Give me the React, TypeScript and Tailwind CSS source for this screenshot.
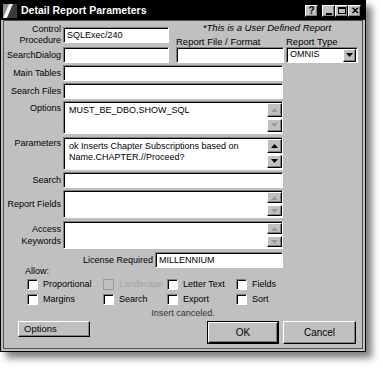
import React from 'react';

const FONT = "font-['Liberation_Sans',Arial,sans-serif]";
const SUNKEN =
  'border border-t-[#808080] border-l-[#808080] border-r-white border-b-white shadow-[inset_1px_1px_0_#000]';
const RAISED =
  'border border-t-white border-l-white border-r-black border-b-black shadow-[inset_-1px_-1px_0_#808080]';

function Input({ w = 'w-[220px]', children }: { w?: string; children?: React.ReactNode }) {
  return (
    <div className={`${w} h-[16px] bg-white ${SUNKEN} px-[3px] text-[9px] leading-[14px] text-black`}>
      {children}
    </div>
  );
}

function Arrow({ up, on }: { up?: boolean; on?: boolean }) {
  return (
    <svg width="7" height="4" viewBox="0 0 7 4">
      {up ? (
        <polygon points="3.5,0 7,4 0,4" fill={on ? '#000' : '#9a9a9a'} />
      ) : (
        <polygon points="0,0 7,0 3.5,4" fill={on ? '#000' : '#9a9a9a'} />
      )}
    </svg>
  );
}

function ScrollBtn({ up, on }: { up?: boolean; on?: boolean }) {
  return (
    <div className={`flex-1 flex items-center justify-center bg-[#c0c0c0] ${RAISED}`}>
      <Arrow up={up} on={on} />
    </div>
  );
}

function TextBox({ h, lines = [], on }: { h: string; lines?: string[]; on?: boolean }) {
  return (
    <div className={`w-[220px] ${h} bg-white ${SUNKEN} flex`}>
      <div className="flex-1 pl-[5px] pt-[3px] text-[9px] leading-[11px] text-black">
        {lines.map((l) => (
          <div key={l}>{l}</div>
        ))}
      </div>
      <div className="w-[15px] flex flex-col gap-[2px] py-[1px]">
        <ScrollBtn up on={on} />
        <ScrollBtn on={on} />
      </div>
    </div>
  );
}

function Row({
  label,
  top = 'items-center',
  labelCls = '',
  className = '',
  children,
}: {
  label: React.ReactNode;
  top?: string;
  labelCls?: string;
  className?: string;
  children: React.ReactNode;
}) {
  return (
    <div className={`flex ${top} ${className}`}>
      <div className={`w-[57px] text-right text-[9px] leading-[11px] ${labelCls}`}>{label}</div>
      <div className="ml-[2px]">{children}</div>
    </div>
  );
}

function Check({ label, off }: { label: string; off?: boolean }) {
  return (
    <div className="flex items-center h-[12px]">
      <div
        className={`w-[11px] h-[11px] ${
          off ? 'bg-[#c0c0c0] border border-[#9a9a9a]' : `bg-white ${SUNKEN}`
        }`}
      />
      <span className={`ml-[5px] text-[9px] leading-[11px] ${off ? 'text-[#a4a4a4]' : 'text-black'}`}>
        {label}
      </span>
    </div>
  );
}

function TitleBtn({ children }: { children: React.ReactNode }) {
  return (
    <div className={`w-[13px] h-[12px] bg-[#c0c0c0] ${RAISED} flex items-center justify-center text-[10px] font-bold leading-none text-black`}>
      {children}
    </div>
  );
}

export default function App() {
  return (
    <div className={`w-[383px] h-[368px] bg-white overflow-hidden ${FONT}`}>
      <div className="w-[366px] h-[352px] bg-[#c0c0c0] border border-black shadow-[6px_6px_7px_rgba(0,0,0,0.5)] flex flex-col">
        {/* title bar */}
        <div className="h-[19px] bg-black flex items-center shrink-0">
          <svg width="14" height="14" viewBox="0 0 14 14" className="ml-[2px]">
            <rect width="14" height="14" fill="#8a8a8a" />
            <polygon points="0,14 6,0 10,0 4,14" fill="#f2f2f2" />
            <polygon points="4,14 10,0 14,0 14,14" fill="#3a3a3a" />
          </svg>
          <span className="ml-[4px] text-white text-[10.5px] font-bold">Detail Report Parameters</span>
          <div className="ml-auto flex items-center mr-[4px]">
            <TitleBtn>?</TitleBtn>
            <div className="ml-[4px] flex">
              <TitleBtn>
                <div className="w-[6px] h-[2px] bg-black mt-[6px]" />
              </TitleBtn>
              <TitleBtn>
                <div className="w-[8px] h-[7px] border border-black border-t-2" />
              </TitleBtn>
              <TitleBtn>✕</TitleBtn>
            </div>
          </div>
        </div>

        {/* body */}
        <div className="flex-1 mx-[2px] mb-[2px] border border-[#505050] text-black">
          <div className="flex mt-[1px]">
            <div>
              <div className="flex mt-[2px]">
                <div className="w-[57px] text-right text-[9px] leading-[11px]">
                  Control
                  <br />
                  Procedure
                </div>
                <div className="ml-[2px] mt-[3px]">
                  <Input w="w-[106px]">SQLExec/240</Input>
                </div>
              </div>
              <Row label="SearchDialog" className="mt-[1px]">
                <Input w="w-[106px]" />
              </Row>
            </div>
            <div className="ml-[7px] w-[182px]">
              <div className="text-center text-[9.5px] italic leading-[11px] h-[11px]">
                *This is a User Defined Report
              </div>
              <div className="flex mt-[4px]">
                <div className="w-[108px]">
                  <div className="text-[9.5px] leading-[10px] h-[10px]">Report File / Format</div>
                  <Input w="w-[108px]" />
                </div>
                <div className="ml-[2px] w-[72px]">
                  <div className="text-[9.5px] leading-[10px] h-[10px]">Report Type</div>
                  <div className={`w-[72px] h-[16px] bg-white ${SUNKEN} flex items-center`}>
                    <span className="pl-[3px] text-[9px] flex-1">OMNIS</span>
                    <div className={`w-[13px] h-[13px] mr-[1px] bg-[#c0c0c0] ${RAISED} flex items-center justify-center`}>
                      <Arrow on />
                    </div>
                  </div>
                </div>
              </div>
            </div>
          </div>

          <Row label="Main Tables" className="mt-[2px]">
            <Input />
          </Row>
          <Row label="Search Files" className="mt-[2px]">
            <Input />
          </Row>
          <Row label="Options" top="items-start" labelCls="mt-[2px]" className="mt-[2px]">
            <TextBox h="h-[33px]" lines={['MUST_BE_DBO,SHOW_SQL']} />
          </Row>
          <Row label="Parameters" top="items-start" labelCls="mt-[1px]" className="mt-[3px]">
            <TextBox
              h="h-[33px]"
              on
              lines={['ok Inserts Chapter Subscriptions based on', 'Name.CHAPTER.//Proceed?']}
            />
          </Row>
          <Row label="Search" className="mt-[2px]">
            <Input />
          </Row>
          <Row label="Report Fields" className="mt-[2px]">
            <TextBox h="h-[28px]" />
          </Row>
          <Row
            label={
              <>
                Access
                <br />
                Keywords
              </>
            }
            labelCls="leading-[12px]"
            className="mt-[3px]"
          >
            <TextBox h="h-[28px]" />
          </Row>

          <div className="flex items-center mt-[3px]">
            <div className="w-[149px] text-right text-[9px] leading-[11px]">License Required</div>
            <div className="ml-[2px]">
              <Input w="w-[128px]">MILLENNIUM</Input>
            </div>
          </div>

          <div className="ml-[21px] -mt-[2px] text-[9px] leading-[10px]">Allow:</div>
          <div className="ml-[23px] mt-[2px] grid grid-cols-[76px_64px_69px_80px] gap-y-[3px]">
            <Check label="Proportional" />
            <Check label="Landscape" off />
            <Check label="Letter Text" />
            <Check label="Fields" />
            <Check label="Margins" />
            <Check label="Search" />
            <Check label="Export" />
            <Check label="Sort" />
          </div>

          <div className="mt-[3px] text-center text-[9px] leading-[10px] text-[#333]">Insert canceled.</div>

          <div className="flex items-start mt-[3px] ml-[14px] mr-[6px]">
            <div className={`w-[72px] h-[16px] ${RAISED} pl-[5px] text-[9.5px] leading-[13px]`}>Options</div>
            <div className="ml-auto flex gap-[4px]">
              <div className="w-[72px] h-[23px] border border-black">
                <div className={`h-full ${RAISED} flex items-center justify-center text-[10px]`}>OK</div>
              </div>
              <div className={`w-[73px] h-[23px] ${RAISED} flex items-center justify-center text-[10px]`}>
                Cancel
              </div>
            </div>
          </div>
        </div>
      </div>
    </div>
  );
}
